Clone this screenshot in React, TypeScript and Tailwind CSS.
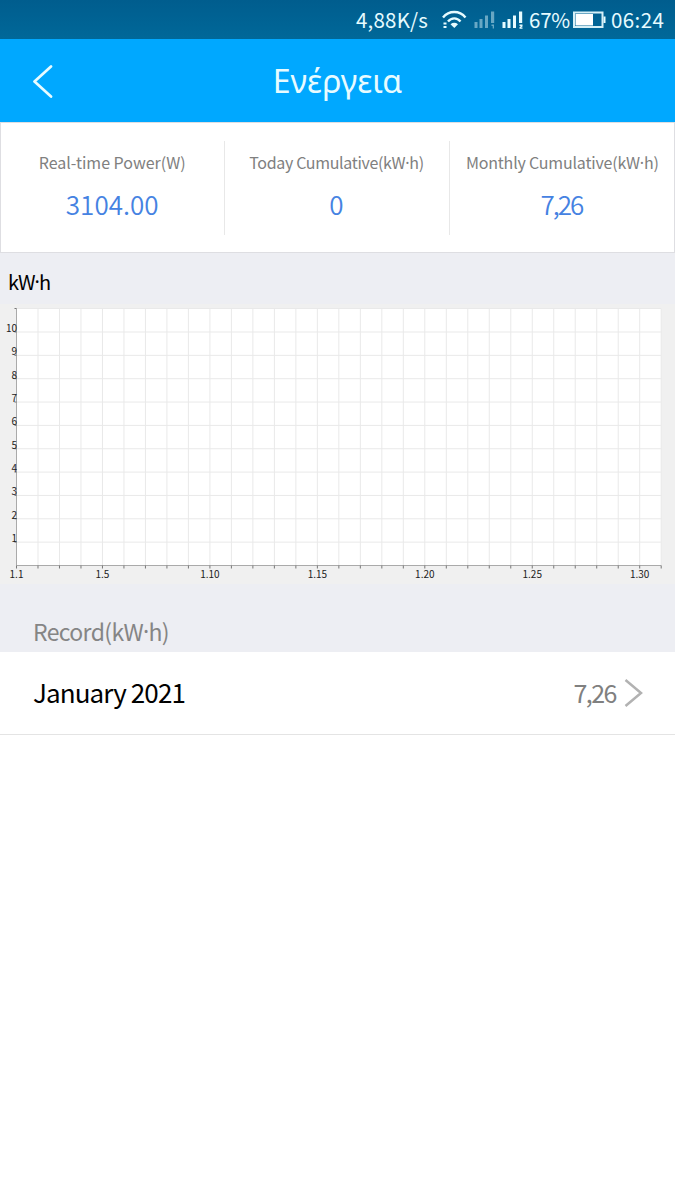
const stats = [
  { label: "Real-time Power", unit: "W", value: "3104.00", labelTracking: "", tracking: "" },
  { label: "Today Cumulative", unit: "kW·h", value: "0", labelTracking: "tracking-[-0.33px]", tracking: "" },
  { label: "Monthly Cumulative", unit: "kW·h", value: "7,26", labelTracking: "tracking-[-0.2px] pl-[2px]", tracking: "tracking-[-2px]" },
];

const records = [{ month: "January 2021", value: "7,26" }];

// chart geometry
const LEFT = 16.5;
const TOP = 4.5;
const BOTTOM = 261.5;
const STEP_X = 21.49;
const STEP_Y = 23.35;
const RIGHT = LEFT + STEP_X * 30;

const days = Array.from({ length: 31 }, (_, i) => i + 1);
const levels = Array.from({ length: 10 }, (_, i) => i + 1);
const labelledDays = [1, 5, 10, 15, 20, 25, 30];

// the CJK font has a full-width middle dot, so units with one take it from Noto Sans
const Unit = ({ name }: { name: string }) => {
  const [left, right] = name.split("·");
  if (!right) return <>{left}</>;
  return (
    <>
      {left}
      <span className="font-['Noto_Sans',sans-serif] leading-none">·</span>
      {right}
    </>
  );
};

const SignalIcon = ({ sim }: { sim: number }) => (
  <svg width="22" height="20" viewBox="0 0 22 20" className={sim === 1 ? "opacity-45" : ""}>
    <g fill="#e6fbff">
      <rect x="0.5" y="12" width="3" height="6" />
      <rect x="5.5" y="9" width="3" height="9" />
      <rect x="11" y="5.5" width="3" height="12.5" />
      <rect x="17" y="1.5" width="3.2" height="11.5" />
      {sim === 1 ? (
        <path d="M17.5 14.500h2.500v4h-1.300v-2.500h-1.200z" />
      ) : (
        <path d="M17.500 14.500h3v2l-1.500 1h1.500v1.200h-3v-1.500l1.500-1.200h-1.500z" />
      )}
    </g>
  </svg>
);

const StatusBar = () => (
  <div className="flex h-[39px] items-center bg-linear-to-b from-[#005d8e] to-[#006899] pl-[356px] text-[20.5px] leading-none text-[#e6fbff]">
    <span className="-mt-px w-[86px] whitespace-nowrap tracking-[0.2px]">4,88K/s</span>
    <svg width="25" height="20" viewBox="0 0 25 20" fill="none" stroke="#e6fbff">
      <path d="M1 7.5C7 .2 17.500 .2 23.500 7.5" strokeWidth="2.4" />
      <path d="M6 11.500C9.500 7.300 15 7.300 18.500 11.500" strokeWidth="2.4" />
      <path d="M12.300 18L8.500 14.300Q12.300 11.400 16 14.300Z" fill="#e6fbff" stroke="none" />
      <path d="M1.500 13.500h3M1.500 17h3" strokeWidth="1.800" />
    </svg>
    <div className="ml-[7px] flex gap-[6px]">
      <SignalIcon sim={1} />
      <SignalIcon sim={2} />
    </div>
    <span className="-mt-px ml-[5px] w-[44px] whitespace-nowrap tracking-[-0.2px]">67%</span>
    <svg width="33" height="18" viewBox="0 0 33 18">
      <rect x="1" y="1.500" width="28.500" height="14.500" fill="none" stroke="#d5eff7" strokeWidth="2" />
      <rect x="2.500" y="3" width="17.500" height="11.500" fill="#fff" />
      <rect x="30.500" y="5.500" width="2" height="6.500" fill="#e6fbff" />
    </svg>
    <span className="-mt-px ml-[5px] whitespace-nowrap tracking-[0.4px]">06:24</span>
  </div>
);

const Header = () => (
  <header className="flex h-[83px] items-center bg-[#00a8ff] text-white">
    <svg className="ml-[32px]" width="22" height="34" viewBox="0 0 22 34" fill="none" stroke="#e8fbff" strokeWidth="2.700" strokeLinecap="round" strokeLinejoin="round">
      <path d="M19 2.500L2.500 17.500L19 32.500" />
    </svg>
    <h1 className="mr-[54px] flex-1 text-center font-['Noto_Sans',sans-serif] text-[32px] leading-none font-normal text-[#e8fbff]">
      Ενέργεια
    </h1>
  </header>
);

const Stats = () => (
  <div className="grid h-[131px] grid-cols-3 items-center border border-[#dedee2] bg-white">
    {stats.map((stat) => (
      <div
        key={stat.label}
        className="-ml-px flex h-[94px] flex-col items-center border-r border-[#e8e8e8] last:border-r-0"
      >
        <span className={`mt-[11px] text-[16px] leading-5 whitespace-nowrap text-[#808080] ${stat.labelTracking}`}>
          {stat.label}(<Unit name={stat.unit} />)
        </span>
        <span className={`mt-[16px] text-[26px] leading-8 font-[350] text-[#4582e2] ${stat.tracking}`}>{stat.value}</span>
      </div>
    ))}
  </div>
);

const EnergyChart = () => (
  <svg className="block" width="675" height="280" viewBox="0 0 675 280">
    <rect width="675" height="280" fill="#f0f0f0" />
    <rect x={LEFT} y={TOP} width={RIGHT - LEFT} height={BOTTOM - TOP} fill="#fff" />
    <g stroke="#e9e9e9">
      {days.map((d) => (
        <line key={d} x1={LEFT + (d - 1) * STEP_X} x2={LEFT + (d - 1) * STEP_X} y1={TOP} y2={BOTTOM} />
      ))}
      <line x1={LEFT} x2={RIGHT} y1={TOP} y2={TOP} />
      {levels.map((n) => (
        <line key={n} x1={LEFT} x2={RIGHT} y1={BOTTOM - n * STEP_Y} y2={BOTTOM - n * STEP_Y} />
      ))}
    </g>
    {/* axes and ticks */}
    <path d={`M${LEFT} ${TOP}V${BOTTOM}H${RIGHT}`} fill="none" stroke="#aaa" />
    <g stroke="#777">
      {days.map((d) => (
        <line key={d} x1={LEFT + (d - 1) * STEP_X} x2={LEFT + (d - 1) * STEP_X} y1={BOTTOM} y2={BOTTOM + 3} />
      ))}
      <line x1={LEFT - 2} x2={LEFT} y1={TOP} y2={TOP} />
      {levels.map((n) => (
        <line key={n} x1={LEFT - 2} x2={LEFT} y1={BOTTOM - n * STEP_Y} y2={BOTTOM - n * STEP_Y} />
      ))}
    </g>
    <g fill="#222" fontSize="10">
      {levels.map((n) => (
        <text key={n} x="17" y={BOTTOM - n * STEP_Y} textAnchor="end">{n}</text>
      ))}
      {labelledDays.map((d) => (
        <text key={d} x={LEFT + (d - 1) * STEP_X} y="274" textAnchor="middle">{`1.${d}`}</text>
      ))}
    </g>
  </svg>
);

export default function App() {
  return (
    <div className="min-h-[1200px] w-[675px] bg-white font-['Noto_Sans_CJK_SC',sans-serif]">
      <StatusBar />
      <Header />
      <Stats />
      <div className="bg-[#edeef3]">
        <div className="flex h-[51px] items-center pt-[7px] pl-[8px] text-[20px] leading-none tracking-[-1px] text-black">
          <Unit name="kW·h" />
        </div>
        <EnergyChart />
        <div className="flex h-[68px] items-center pt-[26px] pl-[33px] text-[23px] leading-none tracking-[-0.65px] text-[#858585]">
          Record(<Unit name="kW·h" />)
        </div>
      </div>
      {records.map((record) => (
        <div key={record.month} className="flex h-[83px] items-center border-b border-[#e4e4e4] pr-[32px] pl-[33px]">
          <span className="-mt-[2px] flex-1 text-[26px] leading-none tracking-[-0.9px] text-black">{record.month}</span>
          <span className="-mt-[2px] text-[25px] leading-none tracking-[-1.5px] text-[#808080]">{record.value}</span>
          <svg className="ml-[8px]" width="19" height="30" viewBox="0 0 19 30" fill="none" stroke="#b2b2b2" strokeWidth="2.500">
            <path d="M1.500 2L17 15L1.500 28" />
          </svg>
        </div>
      ))}
    </div>
  );
}
